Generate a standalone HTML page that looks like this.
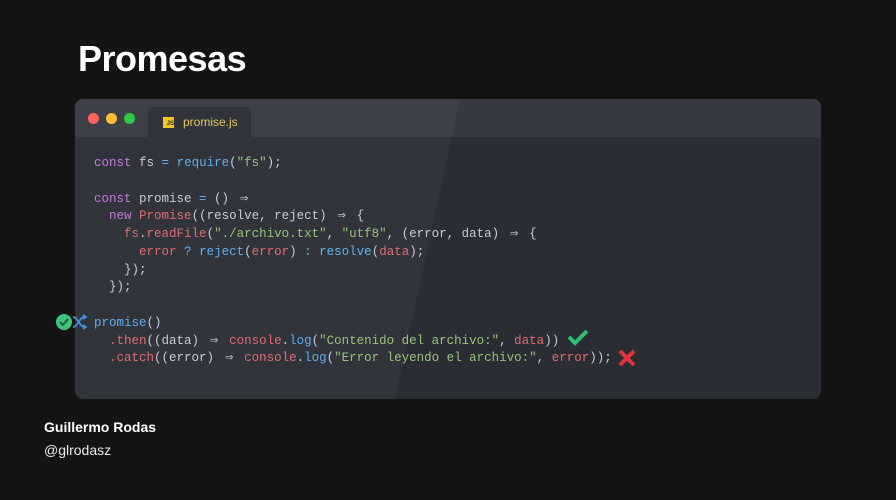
<!DOCTYPE html>
<html><head><style>
body{margin:0;width:896px;height:500px;background:#141414;position:relative;overflow:hidden;font-family:"Liberation Sans",sans-serif}
h1{position:absolute;left:78px;top:38px;margin:0;font-size:36px;color:#fff;font-weight:bold;letter-spacing:-0.5px}
.win{position:absolute;left:75px;top:99px;width:746px;height:300px;border-radius:8px;background:#2a2d33;overflow:hidden}
.ov{position:absolute;left:0;top:0;width:746px;height:300px;background:rgba(255,255,255,0.035);clip-path:polygon(0 0,385px 0,320px 300px,0 300px);z-index:2}
.hdr{position:absolute;left:0;top:0;width:100%;height:38px;background:#373a42}
.dot{position:absolute;top:14px;width:11px;height:11px;border-radius:50%}
.tab{position:absolute;left:73px;top:8px;width:103px;height:30px;background:#2a2d33;border-radius:6px 6px 0 0;z-index:1}
.tab .ic{position:absolute;left:15px;top:10px;width:11px;height:11px;background:#f0c419;font-size:6px;color:#222;font-weight:bold;text-align:right;line-height:14px}
.tab span{position:absolute;left:35px;top:8px;color:#e8c35a;font-size:12px}
pre{position:absolute;left:94px;top:155px;margin:0;font-family:"Liberation Mono",monospace;font-size:12.5px;line-height:17.75px;color:#c8ccd4;z-index:3}
.a{display:inline-block;width:15px;text-align:center;font-family:"DejaVu Sans Mono",monospace;font-size:14px;line-height:10px}
.k{color:#c678dd}.f{color:#61afef}.s{color:#98c379}.r{color:#e06c75}
.name{position:absolute;left:44px;top:419px;color:#fff;font-weight:bold;font-size:14px}
.hand{position:absolute;left:44px;top:442px;color:#e8e8e8;font-size:14px}
</style></head><body>
<h1>Promesas</h1>
<div class="win">
<div class="hdr"></div>
<div class="ov"></div>
<div class="dot" style="left:13px;background:#fe5f57"></div>
<div class="dot" style="left:31px;background:#febc2e"></div>
<div class="dot" style="left:49px;background:#28c840"></div>
<div class="tab"><div class="ic">JS</div><span>promise.js</span></div>
</div>
<pre><span class="k">const</span> fs <span class="f">=</span> <span class="f">require</span>(<span class="s">"fs"</span>);

<span class="k">const</span> promise <span class="f">=</span> () <span class="a">⇒</span>
  <span class="k">new</span> <span class="r">Promise</span>((resolve, reject) <span class="a">⇒</span> {
    <span class="r">fs</span>.<span class="r">readFile</span>(<span class="s">"./archivo.txt"</span>, <span class="s">"utf8"</span>, (error, data) <span class="a">⇒</span> {
      <span class="r">error</span> <span class="f">?</span> <span class="f">reject</span>(<span class="r">error</span>) <span class="f">:</span> <span class="f">resolve</span>(<span class="r">data</span>);
    });
  });

<span class="f">promise</span>()
  <span class="r">.then</span>((data) <span class="a">⇒</span> <span class="r">console</span>.<span class="f">log</span>(<span class="s">"Contenido del archivo:"</span>, <span class="r">data</span>))
  <span class="r">.catch</span>((error) <span class="a">⇒</span> <span class="r">console</span>.<span class="f">log</span>(<span class="s">"Error leyendo el archivo:"</span>, <span class="r">error</span>));</pre>
<svg style="position:absolute;left:55px;top:312px;z-index:4" width="40" height="20">
<circle cx="9" cy="10" r="8" fill="#3ec47a"/><path d="M5 10l3 3 5-6" stroke="#1f5e3a" stroke-width="2" fill="none"/>
<path d="M18 5c5 0 6 10 12 10M18 15c5 0 6-10 12-10M28 3l3 2-3 2M28 13l3 2-3 2" stroke="#3b8fe0" stroke-width="1.8" fill="none"/>
</svg>
<svg style="position:absolute;left:567px;top:328px;z-index:4" width="22" height="18"><path d="M2 9l6 6 12-12" stroke="#2fbf71" stroke-width="4" fill="none"/></svg>
<svg style="position:absolute;left:618px;top:349px;z-index:4" width="18" height="18"><path d="M2 2l14 14M16 2L2 16" stroke="#e0323c" stroke-width="4"/></svg>
<div class="name">Guillermo Rodas</div>
<div class="hand">@glrodasz</div>
</body></html>
